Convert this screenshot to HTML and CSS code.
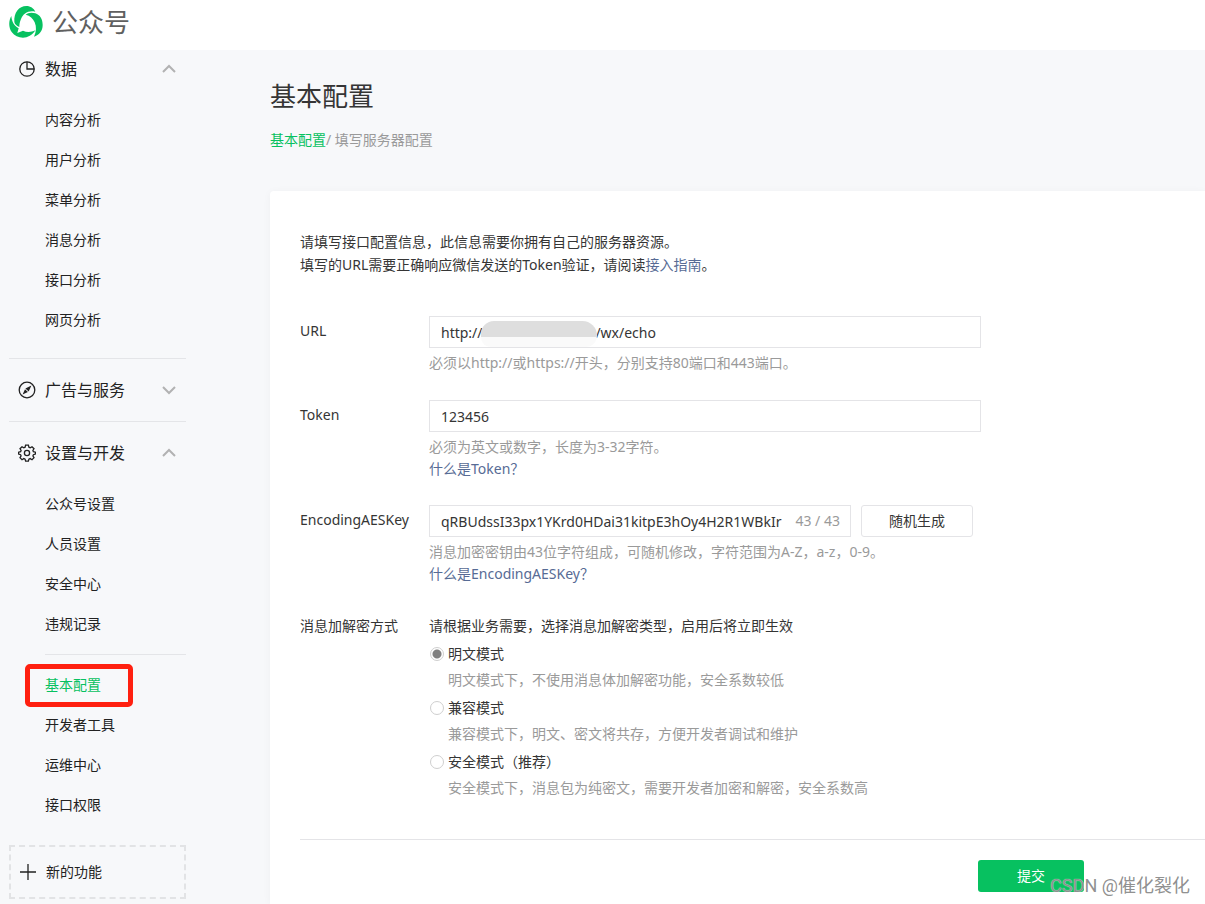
FILE: index.html
```html
<!DOCTYPE html>
<html lang="zh-CN">
<head>
<meta charset="utf-8">
<title>公众号 - 基本配置</title>
<link rel="stylesheet" href="styles.css">
</head>
<body>
<header class="topbar">
  <a class="brand" href="#">
    <svg class="brand-logo" viewBox="26 16 102 100" aria-hidden="true">
      <path d="M42 66C40 38 56 18 78 18C91 18 100 25 105 35C84 30 68 41 62 57C58 66 57 74 57 81C48 77 43 73 42 66z"/>
      <path d="M76 44C82 38 94 36 105 40C119 45 127 57 127 75C127 93 116 106 101 110C108 96 109 80 103 67C98 56 89 47 76 44z"/>
      <path d="M33 48C25 62 24 81 34 96C51 119 88 120 105 91C92 97 79 97 68 92L51 99L55 85C41 77 34 64 33 48z"/>
    </svg>
    <span>公众号</span>
  </a>
</header>
<div class="layout">
  <nav class="sidebar">
    <section class="group">
      <button class="group-title" type="button">
        <svg class="icon" viewBox="0 0 18 18"><circle cx="9" cy="9" r="7.2"/><path d="M9 1.8V9h7.2"/></svg>
        <span>数据</span>
        <svg class="chevron" viewBox="0 0 16 10"><path d="M2 8l6-6 6 6"/></svg>
      </button>
      <div class="items">
        <a href="#">内容分析</a>
        <a href="#">用户分析</a>
        <a href="#">菜单分析</a>
        <a href="#">消息分析</a>
        <a href="#">接口分析</a>
        <a href="#">网页分析</a>
      </div>
    </section>
    <section class="group">
      <button class="group-title" type="button">
        <svg class="icon" viewBox="0 0 18 18"><circle cx="9" cy="9" r="7.8"/><path class="solid" d="M13.400 4.600L10.700 10.600 7.400 7.400zM4.600 13.400l2.400-5.200 2.900 2.800z"/></svg>
        <span>广告与服务</span>
        <svg class="chevron" viewBox="0 0 16 10"><path d="M2 2l6 6 6-6"/></svg>
      </button>
    </section>
    <section class="group">
      <button class="group-title" type="button">
        <svg class="icon" viewBox="0 0 18 18"><path d="M7.6 1.200h2.800l.5 2 1.300.6 1.800-1.100 2 2-1.100 1.800.5 1.200 2 .5v1.900l-2 .6-.5 1.200 1.100 1.800-2 2-1.800-1.100-1.300.6-.5 2H7.600l-.5-2-1.300-.6L4 15.700l-2-2 1.100-1.800-.5-1.200-2-.6V8.200l2-.5.5-1.200L2 4.700l2-2 1.800 1.100 1.300-.6z"/><circle cx="9" cy="9" r="2.600"/></svg>
        <span>设置与开发</span>
        <svg class="chevron" viewBox="0 0 16 10"><path d="M2 8l6-6 6 6"/></svg>
      </button>
      <div class="items">
        <a href="#">公众号设置</a>
        <a href="#">人员设置</a>
        <a href="#">安全中心</a>
        <a href="#">违规记录</a>
      </div>
      <div class="items items-split">
        <a class="active" href="#">基本配置</a>
        <a href="#">开发者工具</a>
        <a href="#">运维中心</a>
        <a href="#">接口权限</a>
      </div>
    </section>
    <button class="add-feature" type="button">
      <svg viewBox="0 0 16 16"><path d="M8 0v16M0 8h16"/></svg>
      <span>新的功能</span>
    </button>
  </nav>
  <main class="content">
    <h1>基本配置</h1>
    <p class="crumbs"><a href="#">基本配置</a>/ <span>填写服务器配置</span></p>
    <form class="card">
      <div class="intro">
        <p>请填写接口配置信息，此信息需要你拥有自己的服务器资源。</p>
        <p>填写的URL需要正确响应微信发送的Token验证，请阅读<a href="#">接入指南</a>。</p>
      </div>
      <div class="field field-url">
        <label class="label" for="url">URL</label>
        <div class="control">
          <div class="box"><input id="url" type="text" value="http://                               /wx/echo"><span class="mask"></span></div>
          <p class="hint">必须以http://或https://开头，分别支持80端口和443端口。</p>
        </div>
      </div>
      <div class="field field-token">
        <label class="label" for="token">Token</label>
        <div class="control">
          <div class="box"><input id="token" type="text" value="123456"></div>
          <p class="hint">必须为英文或数字，长度为3-32字符。</p>
          <p class="hint"><a href="#">什么是Token？</a></p>
        </div>
      </div>
      <div class="field field-key">
        <label class="label" for="aeskey">EncodingAESKey</label>
        <div class="control">
          <div class="key-row">
            <div class="box"><input id="aeskey" type="text" value="qRBUdssI33px1YKrd0HDai31kitpE3hOy4H2R1WBkIr"><span class="count">43 / 43</span></div>
            <button class="random" type="button">随机生成</button>
          </div>
          <p class="hint">消息加密密钥由43位字符组成，可随机修改，字符范围为A-Z，a-z，0-9。</p>
          <p class="hint"><a href="#">什么是EncodingAESKey？</a></p>
        </div>
      </div>
      <div class="field field-mode">
        <span class="label" id="mode-label">消息加解密方式</span>
        <div class="control" role="radiogroup" aria-labelledby="mode-label">
          <p class="lead">请根据业务需要，选择消息加解密类型，启用后将立即生效</p>
          <label class="option"><input type="radio" name="mode" checked><span>明文模式</span></label>
          <p class="option-note">明文模式下，不使用消息体加解密功能，安全系数较低</p>
          <label class="option"><input type="radio" name="mode"><span>兼容模式</span></label>
          <p class="option-note">兼容模式下，明文、密文将共存，方便开发者调试和维护</p>
          <label class="option"><input type="radio" name="mode"><span>安全模式（推荐）</span></label>
          <p class="option-note">安全模式下，消息包为纯密文，需要开发者加密和解密，安全系数高</p>
        </div>
      </div>
      <div class="actions"><button class="submit" type="submit">提交</button></div>
    </form>
  </main>
</div>
<div class="watermark">CSDN @催化裂化</div>
</body>
</html>
```
FILE: styles.css
```css
* { box-sizing: border-box; }
*::before, *::after { box-sizing: border-box; }
body {
  margin: 0;
  position: relative;
  background: #f7f8fa;
  color: #353535;
  font: 14px/22px "Noto Sans", "Noto Sans CJK SC", sans-serif;
  font-weight: 400;
  overflow-x: hidden;
}
p, h1 { margin: 0; }
a { color: #576b95; text-decoration: none; }
button, input { font: inherit; color: inherit; }
button { cursor: pointer; }

.topbar { height: 50px; padding: 0 9px; background: #fff; display: flex; align-items: center; }
.brand { display: flex; align-items: center; gap: 9px; height: 44px; margin-bottom: 6px; color: #606060; font-size: 26px; line-height: 40px; }
.brand-logo { width: 34px; height: 34px; fill: #07c160; }

.layout { display: flex; }
.sidebar { flex: none; width: 270px; padding: 0 84px 5px 9px; color: #222; }
.group { padding-bottom: 18px; }
.group + .group { border-top: 1px solid #e4e5e8; padding: 12px 0; }
.group-title { display: flex; align-items: center; width: 100%; height: 38px; padding: 0 9px; border: 0; background: none; font-size: 16px; text-align: left; gap: 9px; }
.icon { flex: none; width: 18px; height: 18px; fill: none; stroke: #222; stroke-width: 1.3; }
.icon .solid { fill: #222; stroke: none; }
.chevron { width: 16px; height: 10px; margin-left: auto; fill: none; stroke: #b2b2b2; stroke-width: 2; }
.items { padding-top: 12px; }
.items a { display: block; height: 40px; padding-left: 36px; line-height: 40px; color: #222; }
.items .active { color: #07c160; position: relative; }
.items .active::after { content: ""; position: absolute; left: 16px; top: -1px; width: 108px; height: 43px; border: 5px solid #ff2010; border-radius: 5px; }
.items-split { margin-top: 10px; padding-top: 11px; background: linear-gradient(#e4e5e8, #e4e5e8) 36px 0 / 100% 1px no-repeat; }
.add-feature { display: flex; align-items: center; gap: 10px; width: 100%; height: 54px; margin-top: 8px; padding: 0 9px; border: 2px dashed #e2e3e5; background: none; }
.add-feature svg { width: 16px; height: 16px; fill: none; stroke: #222; stroke-width: 1.3; }

.content { flex: 1; min-width: 0; display: flex; flex-direction: column; }
h1 { padding-top: 26px; font-size: 26px; line-height: 40px; font-weight: 400; }
.crumbs { margin-top: 13px; color: #9a9a9a; }
.crumbs a { color: #07c160; }
.card { flex: 1; margin-top: 40px; padding: 39px 0 12px 30px; background: #fff; border-radius: 4px 0 0 0; box-shadow: 0 1px 8px rgba(0, 0, 0, .04); }
.intro { line-height: 23px; margin-bottom: 40px; }
.field { display: flex; }
.label { flex: none; width: 129px; line-height: 30px; }
.control { flex: 1; max-width: 552px; }
.box { position: relative; display: flex; align-items: center; flex: 1; height: 32px; border: 1px solid #e4e4e7; background: #fff; margin-bottom: 4px; }
.box input { flex: 1; min-width: 0; height: 30px; padding: 0 0 0 11px; border: 0; background: none; outline: 0; }
.mask { position: absolute; left: 51px; top: 4px; width: 116px; height: 26px; border-radius: 16px 18px 14px 12px; background: linear-gradient(#dedede 0 16px, #fafafa 16px); }
.hint { color: #9a9a9a; }
.field-url { margin-bottom: 26px; }
.field-token { margin-bottom: 25px; }
.field-key { margin-bottom: 30px; }
.key-row { display: flex; gap: 10px; width: 544px; }
.count { padding: 0 10px 0 8px; color: #9a9a9a; }
.random { width: 112px; height: 32px; border: 1px solid #e4e4e7; border-radius: 3px; background: #fff; padding: 0; }
.field-mode .label { line-height: 22px; }
.lead { margin-bottom: 3px; }
.option { display: flex; align-items: center; gap: 4px; height: 27px; }
.option input { appearance: none; flex: none; width: 14px; height: 14px; margin: 0 0 0 1px; border: 1px solid #cfcfcf; border-radius: 50%; background: #fff; }
.option input:checked { background: radial-gradient(circle, #808080 0 4px, #fff 5px); }
.option-note { padding-left: 19px; line-height: 26px; margin-bottom: 1px; color: #9a9a9a; }
.actions { margin-top: 37px; padding: 20px 0 0 678px; border-top: 1px solid #e4e4e7; }
.submit { display: block; width: 106px; height: 32px; padding: 0; border: 0; border-radius: 3px; background: #07c160; color: #fff; }
.watermark { position: absolute; right: 15px; bottom: 5px; font-family: Roboto, "Noto Sans CJK SC", sans-serif; font-size: 18px; line-height: 26px; color: rgba(130, 130, 130, .9); text-shadow: 0 0 1px #fff; pointer-events: none; }
```
